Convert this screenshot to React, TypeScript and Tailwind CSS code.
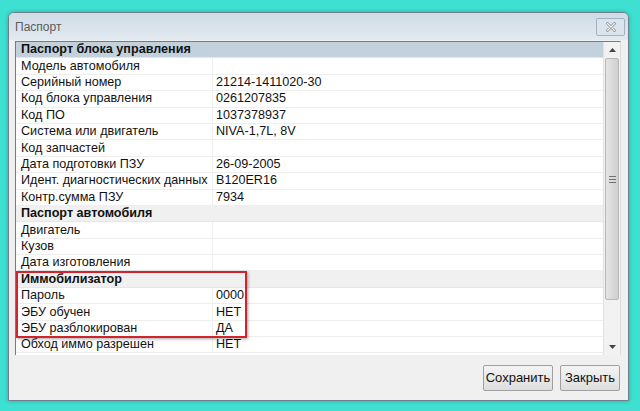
import React from "react";

type Row = { label: string; value?: string; header?: boolean };

const rows: Row[] = [
  { label: "Паспорт блока управления", header: true },
  { label: "Модель автомобиля" },
  { label: "Серийный номер", value: "21214-1411020-30" },
  { label: "Код блока управления", value: "0261207835" },
  { label: "Код ПО", value: "1037378937" },
  { label: "Система или двигатель", value: "NIVA-1,7L, 8V" },
  { label: "Код запчастей" },
  { label: "Дата подготовки ПЗУ", value: "26-09-2005" },
  { label: "Идент. диагностических данных", value: "B120ER16" },
  { label: "Контр.сумма ПЗУ", value: "7934" },
  { label: "Паспорт автомобиля", header: true },
  { label: "Двигатель" },
  { label: "Кузов" },
  { label: "Дата изготовления" },
  { label: "Иммобилизатор", header: true },
  { label: "Пароль", value: "0000" },
  { label: "ЭБУ обучен", value: "НЕТ" },
  { label: "ЭБУ разблокирован", value: "ДА" },
  { label: "Обход иммо разрешен", value: "НЕТ" },
];

const GridRow = ({ row, first }: { row: Row; first: boolean }) => {
  if (row.header) {
    return (
      <div
        className={`h-[16.4px] flex items-center pl-[5px] font-bold border-b border-[#e6e6e6] ${
          first ? "bg-[#c3d1dc]" : "bg-[#f0f0f0]"
        }`}
      >
        {row.label}
      </div>
    );
  }
  return (
    <div className="h-[16.4px] flex items-center border-b border-[#eeeeee] bg-white">
      <div className="w-[197px] pl-[5px] h-full flex items-center border-r border-[#eeeeee] whitespace-nowrap">
        {row.label}
      </div>
      <div className="pl-[3px] whitespace-nowrap">{row.value}</div>
    </div>
  );
};

const Scrollbar = () => (
  <div className="w-[17px] h-full bg-[#f2f2f2] border-l border-[#e2e2e2] flex flex-col items-center">
    <div className="h-[16px] w-full flex items-center justify-center">
      <svg width="7" height="4" viewBox="0 0 7 4">
        <path d="M3.5 0 L7 4 L0 4 Z" fill="#444" />
      </svg>
    </div>
    <div className="w-[14px] h-[242px] rounded-[2px] border border-[#b8b8b8] bg-gradient-to-r from-[#e4e4e4] via-[#dadada] to-[#cfcfcf] flex items-center justify-center">
      <div className="flex flex-col gap-[2px]">
        <div className="w-[7px] h-px bg-[#707070]" />
        <div className="w-[7px] h-px bg-[#707070]" />
        <div className="w-[7px] h-px bg-[#707070]" />
      </div>
    </div>
    <div className="flex-1" />
    <div className="h-[16px] w-full flex items-center justify-center">
      <svg width="7" height="4" viewBox="0 0 7 4">
        <path d="M0 0 L7 0 L3.5 4 Z" fill="#444" />
      </svg>
    </div>
  </div>
);

const Button = ({ children, w }: { children: React.ReactNode; w: string }) => (
  <button
    className={`${w} h-[26px] border border-[#a0a0a0] rounded-[2px] bg-gradient-to-b from-[#f4f4f4] to-[#dedede] text-[13px] text-[#111] flex items-center justify-center`}
  >
    {children}
  </button>
);

export default function App() {
  return (
    <div
      className="w-[640px] h-[411px] bg-[#3ee0d2] pt-[12px] pl-[8px] overflow-hidden"
      style={{ fontFamily: '"Liberation Sans", Arial, sans-serif' }}
    >
      <div className="w-[621px] h-[389px] rounded-t-[6px] border border-[#6f7f8c] flex flex-col bg-[#f0f0f0] shadow-[0_0_4px_rgba(0,0,0,0.25)] overflow-hidden">
        <div className="h-[27px] shrink-0 bg-gradient-to-b from-[#cfdbe6] to-[#e2eaf1] flex items-center justify-between pl-[6px] pr-[3px]">
          <span className="text-[12px] text-[#5a5a5a]">Паспорт</span>
          <div className="w-[29px] h-[18px] border border-[#a3b2c0] rounded-[2px] bg-[#dbe4ec] flex items-center justify-center">
            <svg width="10" height="10" viewBox="0 0 10 10">
              <path d="M1.5 1.5 L8.5 8.5 M8.5 1.5 L1.5 8.5" stroke="#8a8f94" strokeWidth="2.6" strokeLinecap="round" />
              <path d="M1.5 1.5 L8.5 8.5 M8.5 1.5 L1.5 8.5" stroke="#f4f6f8" strokeWidth="1.1" strokeLinecap="round" />
            </svg>
          </div>
        </div>
        <div className="pl-[6px] pr-[7px] pt-[1px]">
          <div className="h-[314px] flex border-t border-l border-[#7a7a7a] border-r border-r-[#dcdcdc] bg-white text-[12.6px] text-[#111]">
            <div className="flex-1 relative overflow-hidden">
              {rows.map((r, i) => (
                <GridRow key={i} row={r} first={i === 0} />
              ))}
              <div className="absolute top-[229px] left-0 w-[231px] h-[67px] border-2 border-[#d3232c] shadow-[1px_1px_3px_rgba(0,0,0,0.35)]" />
            </div>
            <Scrollbar />
          </div>
        </div>
        <div className="flex-1 flex justify-end gap-[7px] pt-[10px] pr-[8px]">
          <Button w="w-[70px]">Сохранить</Button>
          <Button w="w-[60px]">Закрыть</Button>
        </div>
      </div>
    </div>
  );
}
